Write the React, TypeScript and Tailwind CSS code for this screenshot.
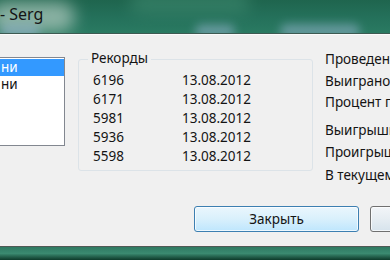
import React from 'react';

const records = [
  { score: '6196', date: '13.08.2012' },
  { score: '6171', date: '13.08.2012' },
  { score: '5981', date: '13.08.2012' },
  { score: '5936', date: '13.08.2012' },
  { score: '5598', date: '13.08.2012' },
];

const stats = [
  { label: 'Проведено игр:', mt: 'mt-0' },
  { label: 'Выиграно игр:', mt: 'mt-[5px]' },
  { label: 'Процент побед:', mt: 'mt-[4px]' },
  { label: 'Выигрыши подряд:', mt: 'mt-[11px]' },
  { label: 'Проигрыши подряд:', mt: 'mt-[5px]' },
  { label: 'В текущем ряду:', mt: 'mt-[6px]' },
];

export default function App() {
  return (
    <div className="w-[390px] h-[260px] overflow-hidden flex flex-col bg-[#f0f0f0] font-['Noto_Sans','Open_Sans',sans-serif] text-[13.5px] text-[#141414]">
      {/* Title bar */}
      <div className="relative h-[33px] shrink-0 overflow-hidden bg-gradient-to-b from-[#1f654e] via-[#24705a] to-[#2a7a62]">
        <span className="absolute left-[-10px] top-[2px] w-[85px] h-[30px] rounded-full bg-[#b5cdc2] opacity-70 blur-[8px]" />
        <span className="absolute left-[0px] top-[24px] w-[40px] h-[14px] rounded-full bg-[#9fb8d8] opacity-50 blur-[5px]" />
        <span className="absolute left-[195px] top-[24px] w-[40px] h-[14px] rounded-full bg-[#9fb8d8] opacity-50 blur-[5px]" />
        <span className="absolute left-[280px] top-[24px] w-[80px] h-[14px] rounded-full bg-[#9fb8d8] opacity-50 blur-[5px]" />
        <span className="absolute left-[130px] top-[-8px] w-[120px] h-[22px] rounded-full bg-[#3f8a70] opacity-60 blur-[8px]" />
        <div className="relative pt-[4px] text-[16px] leading-[20px] text-[#141414]">- Serg</div>
      </div>
      <div className="h-px shrink-0 bg-[#3d5a52]" />
      <div className="h-px shrink-0 bg-[#fbfbfb]" />

      {/* Client area */}
      <div className="flex flex-col flex-1 pt-[22px]">
        <div className="flex h-[149px] items-start">
          {/* List box */}
          <div className="-ml-px w-[66px] h-[89px] border border-[#828790] bg-white pt-px shrink-0">
            <div className="h-[17px] leading-[17px] bg-[#3399ff] text-white pl-[1px]">ни</div>
            <div className="h-[17px] leading-[17px] pl-[1px]">ни</div>
          </div>

          {/* Records group */}
          <div className="relative ml-[13px] mt-[2px] w-[235px] h-[112px] shrink-0 rounded-[3px] border border-[#dce3e8] pt-[11px] pl-[14px]">
            <span className="absolute left-[9px] top-[-10px] px-[3px] bg-[#f0f0f0] leading-[17px]">Рекорды</span>
            {records.map((r, i) => (
              <div key={i} className="flex h-[19px] leading-[19px]">
                <span className="w-[89px]">{r.score}</span>
                <span>{r.date}</span>
              </div>
            ))}
          </div>

          {/* Stats */}
          <div className="ml-[12px] -mt-[6px] flex flex-col whitespace-nowrap">
            {stats.map((s, i) => (
              <div key={i} className={`${s.mt} leading-[17px]`}>{s.label}</div>
            ))}
          </div>
        </div>

        {/* Buttons */}
        <div className="flex gap-[11px] pl-[194px]">
          <button className="shrink-0 w-[165px] h-[26px] rounded-[3px] border border-[#3c7fb1] bg-gradient-to-b from-[#eaf6fd] via-[#d9f0fc] to-[#bee6fd] shadow-[inset_0_0_0_1px_rgba(255,255,255,0.7)] text-[13.5px] leading-[22px] text-[#141414]">
            Закрыть
          </button>
          <button className="shrink-0 w-[100px] h-[26px] rounded-[3px] border border-[#707070] bg-gradient-to-b from-[#f2f5f8] via-[#e6edf2] to-[#d6e3ec] shadow-[inset_0_0_0_1px_rgba(255,255,255,0.7)] text-[13.5px] text-[#141414]">
            Сброс
          </button>
        </div>
      </div>

      {/* Bottom frame */}
      <div className="h-px shrink-0 bg-[#f7eef0]" />
      <div className="h-px shrink-0 bg-[#4f5a56]" />
      <div className="h-[13px] shrink-0 bg-gradient-to-b from-[#2f7a62] via-[#3b8a70] to-[#0e3a2a]" />
    </div>
  );
}
